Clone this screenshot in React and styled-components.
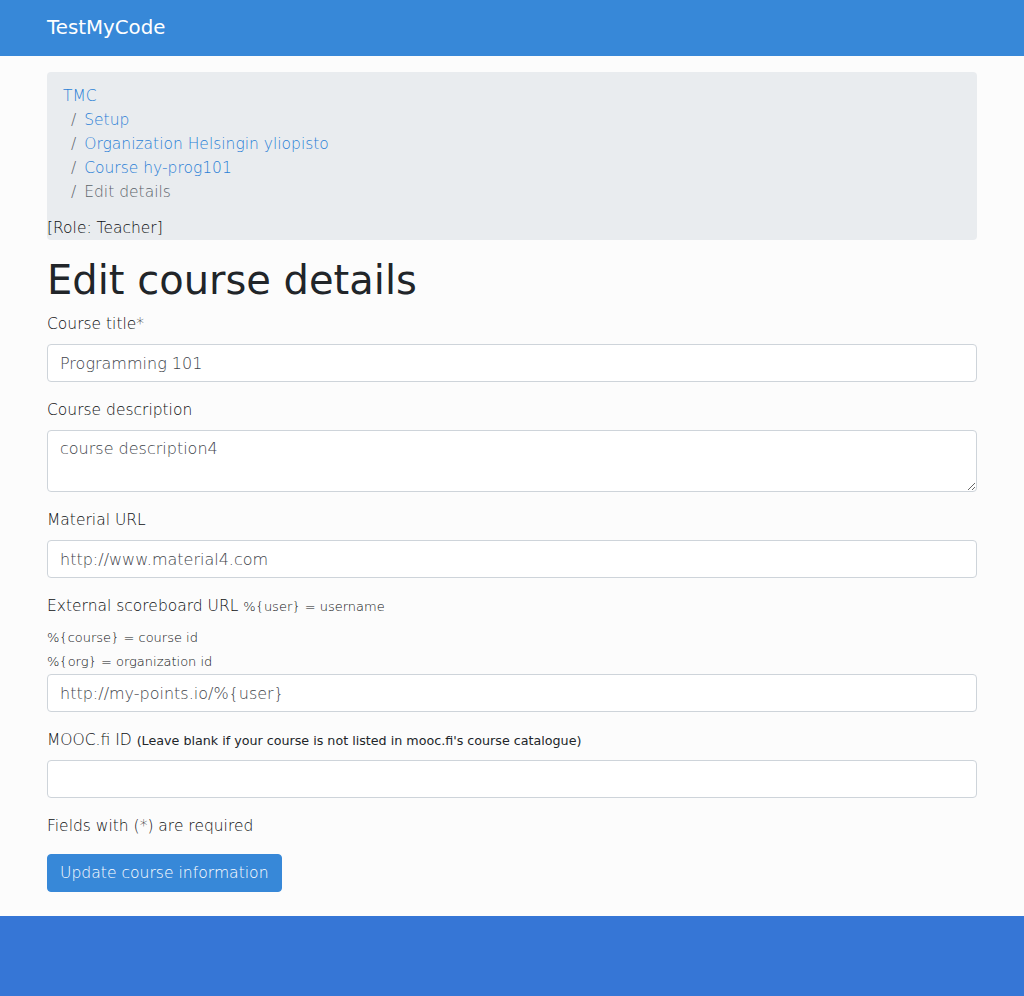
import React from "react";
import styled, { createGlobalStyle } from "styled-components";

const Global = createGlobalStyle`
  html, body { margin: 0; padding: 0; }
  body {
    background: #fcfcfc;
    font-family: "DejaVu Sans", sans-serif;
    font-weight: 300;
    font-size: 15.5px;
    line-height: 24px;
    color: #0d0f11;
  }
  * { box-sizing: border-box; }
`;

const Navbar = styled.nav`
  height: 56px;
  background: #3788d8;
  display: flex;
  align-items: center;
`;

const Container = styled.div`
  width: 960px;
  margin: 0 auto;
  padding: 0 15px;
`;

const Brand = styled.a`
  color: #fff;
  font-size: 19.8px;
  font-weight: 400;
  text-decoration: none;
  line-height: 30px;
`;

const Main = styled.main`
  padding-top: 16px;
  padding-bottom: 24px;
`;

const CrumbBox = styled.div`
  background: #e9ecef;
  border-radius: 4px;
`;

const Crumbs = styled.ol`
  list-style: none;
  margin: 0;
  padding: 12px 16px;
`;

const Crumb = styled.li`
  color: ${(p) => (p.$active ? "#5c646b" : "inherit")};
  &:not(:first-child) {
    padding-left: 8px;
  }
  &:not(:first-child)::before {
    content: "/";
    color: #5c646b;
    padding-right: 8px;
  }
`;

const CrumbLink = styled.a`
  color: #2a7fd6;
  text-decoration: none;
`;

const Role = styled.div``;

const Title = styled.h1`
  font-size: 40px;
  font-weight: 400;
  line-height: 48px;
  margin: 16px 0 8px;
  color: #212529;
`;

const Group = styled.div`
  margin-bottom: 16px;
`;

const Label = styled.label`
  display: inline-block;
  margin-bottom: 8px;
  height: 24px;
`;

const Small = styled.small`
  font-size: ${(p) => (p.$regular ? "12.7px" : "13px")};
  font-weight: ${(p) => (p.$regular ? 400 : 300)};
  color: ${(p) => (p.$regular ? "#212529" : "inherit")};
  line-height: 16px;
`;

const Hint = styled.div`
  font-size: 13px;
  line-height: 24px;
`;

const Input = styled.input`
  display: block;
  width: 100%;
  height: 38px;
  padding: 6px 12px;
  font-family: inherit;
  font-size: 16px;
  font-weight: 300;
  line-height: 24px;
  color: #3f454b;
  background: #fff;
  border: 1px solid #ced4da;
  border-radius: 4px;
  outline: none;
`;

const TextArea = styled.textarea`
  display: block;
  width: 100%;
  height: 62px;
  padding: 6px 12px;
  font-family: inherit;
  font-size: 16px;
  font-weight: 300;
  line-height: 24px;
  color: #3f454b;
  background: #fff;
  border: 1px solid #ced4da;
  border-radius: 4px;
  outline: none;
`;

const Note = styled.p`
  margin: 0 0 16px;
`;

const Button = styled.button`
  font-family: inherit;
  font-size: 15.6px;
  font-weight: 300;
  color: #fff;
  background: #3788d8;
  border: 1px solid #3788d8;
  border-radius: 4px;
  padding: 6px 12px;
  line-height: 24px;
`;

const Footer = styled.footer`
  height: 80px;
  background: #3676d6;
`;

export default function App() {
  return (
    <>
      <Global />
      <Navbar>
        <Container>
          <Brand href="#">TestMyCode</Brand>
        </Container>
      </Navbar>
      <Main>
        <Container>
          <CrumbBox>
            <Crumbs>
              <Crumb><CrumbLink href="#">TMC</CrumbLink></Crumb>
              <Crumb><CrumbLink href="#">Setup</CrumbLink></Crumb>
              <Crumb><CrumbLink href="#">Organization Helsingin yliopisto</CrumbLink></Crumb>
              <Crumb><CrumbLink href="#">Course hy-prog101</CrumbLink></Crumb>
              <Crumb $active>Edit details</Crumb>
            </Crumbs>
            <Role>[Role: Teacher]</Role>
          </CrumbBox>
          <Title>Edit course details</Title>
          <form>
            <Group>
              <Label>Course title*</Label>
              <Input defaultValue="Programming 101" />
            </Group>
            <Group>
              <Label>Course description</Label>
              <TextArea defaultValue="course description4" />
            </Group>
            <Group>
              <Label>Material URL</Label>
              <Input defaultValue="http://www.material4.com" />
            </Group>
            <Group>
              <Label>
                External scoreboard URL <Small>%{"{user}"} = username</Small>
              </Label>
              <Hint>
                %{"{course}"} = course id
                <br />
                %{"{org}"} = organization id
              </Hint>
              <Input defaultValue="http://my-points.io/%{user}" />
            </Group>
            <Group>
              <Label>
                MOOC.fi ID <Small $regular>(Leave blank if your course is not listed in mooc.fi's course catalogue)</Small>
              </Label>
              <Input />
            </Group>
            <Note>Fields with (*) are required</Note>
            <Button type="button">Update course information</Button>
          </form>
        </Container>
      </Main>
      <Footer />
    </>
  );
}
